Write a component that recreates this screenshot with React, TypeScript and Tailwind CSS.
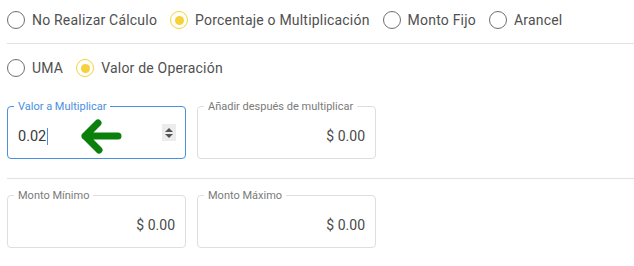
import React from 'react';

function Radio({ label, checked = false }: { label: string; checked?: boolean }) {
  return (
    <label className="mr-[13px] flex items-center gap-[7px] text-[14px] tracking-[0.2px] text-[#505050]">
      <span
        className={`flex h-[18px] w-[18px] items-center justify-center rounded-full border ${
          checked ? 'border-[#f7d13a]' : 'border-[#6f6f6f]'
        }`}
      >
        {checked && <span className="h-[9px] w-[9px] rounded-full bg-[#f7d13a]" />}
      </span>
      <span>{label}</span>
    </label>
  );
}

function Field({
  label,
  value,
  focused = false,
  number = false,
}: {
  label: string;
  value: string;
  focused?: boolean;
  number?: boolean;
}) {
  return (
    <div
      className={`relative flex h-[53px] w-[179px] items-center rounded-[4px] border pt-[8px] ${
        focused ? 'border-[#4a8fe0]' : 'border-[#dedede]'
      }`}
    >
      <span
        className={`absolute left-[6px] top-[-7px] bg-white px-[4px] text-[11px] leading-[13px] ${
          focused ? 'text-[#4a8fe0]' : 'text-[#7a7a7a]'
        }`}
      >
        {label}
      </span>
      {number ? (
        <div className="flex w-full items-center pl-[10px] pr-[9px]">
          <span className="text-[14.5px] text-[#3a3a3a]">{value}</span>
          <span className="ml-px h-[17px] w-px bg-[#4a8fe0]" />
          <span className="ml-auto mt-[-8px] flex h-[17px] w-[14px] flex-col items-center justify-center gap-[2px] bg-[#ececec]">
            <svg width="8" height="4" viewBox="0 0 8 4">
              <path d="M0 4 L4 0 L8 4 Z" fill="#555" />
            </svg>
            <svg width="8" height="4" viewBox="0 0 8 4">
              <path d="M0 0 L4 4 L8 0 Z" fill="#555" />
            </svg>
          </span>
        </div>
      ) : (
        <div className="w-full pr-[10px] text-right text-[14px] text-[#4a4a4a]">{value}</div>
      )}
    </div>
  );
}

export default function App() {
  return (
    <div className="h-[266px] w-[634px] bg-white pl-[7px] font-['Roboto',sans-serif]">
      {/* Tipo de cálculo */}
      <div className="flex h-[40px] items-center">
        <Radio label="No Realizar Cálculo" />
        <Radio label="Porcentaje o Multiplicación" checked />
        <Radio label="Monto Fijo" />
        <Radio label="Arancel" />
      </div>
      <div className="mt-[3px] h-px bg-[#e2e2e2]" />

      {/* Base */}
      <div className="mt-[4px] flex h-[40px] items-center">
        <Radio label="UMA" />
        <Radio label="Valor de Operación" checked />
      </div>

      <div className="relative mt-[18px] flex gap-[11px]">
        <Field label="Valor a Multiplicar" value="0.02" focused number />
        <Field label="Añadir después de multiplicar" value="$ 0.00" />
        <svg
          className="absolute left-[68px] top-[12px]"
          width="52"
          height="38"
          viewBox="0 0 52 38"
          fill="none"
        >
          <path
            d="M10 18 H43 M10 18 L23 5 M10 18 L24 32"
            stroke="#0b800b"
            strokeWidth="7"
            strokeLinecap="round"
            strokeLinejoin="round"
          />
        </svg>
      </div>

      <div className="mt-[19px] h-px bg-[#e2e2e2]" />

      <div className="mt-[16px] flex gap-[11px]">
        <Field label="Monto Mínimo" value="$ 0.00" />
        <Field label="Monto Máximo" value="$ 0.00" />
      </div>
    </div>
  );
}
